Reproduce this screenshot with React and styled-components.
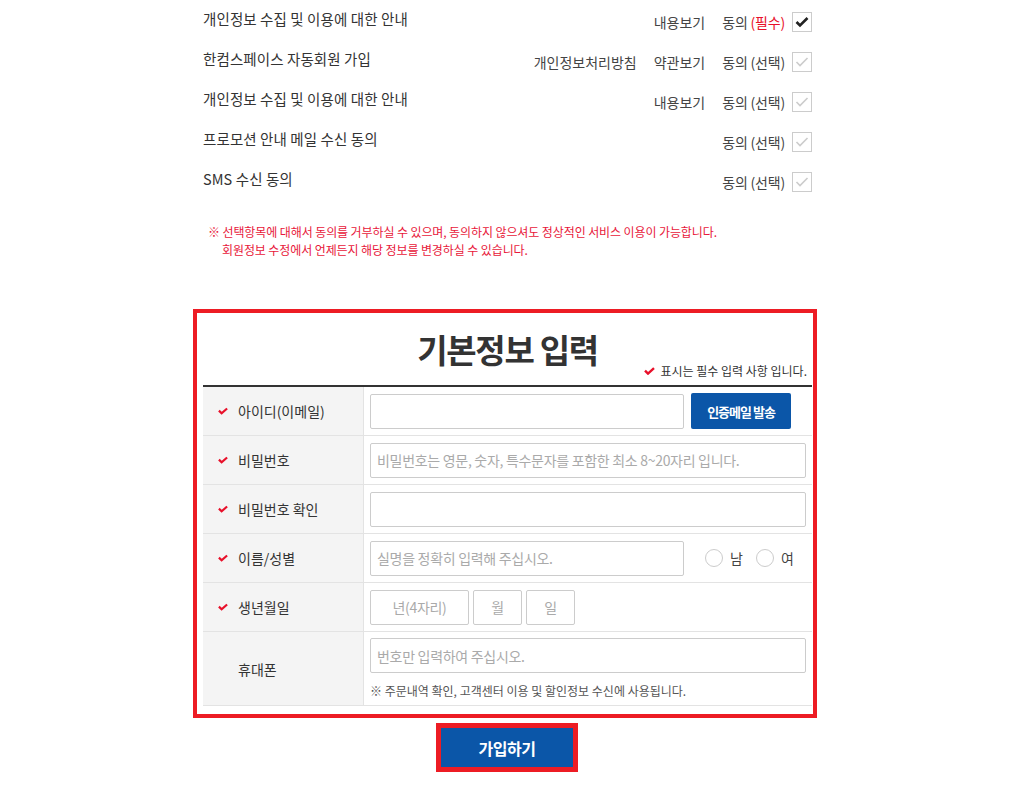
import React from 'react'
import styled, { createGlobalStyle } from 'styled-components'

const GlobalStyle = createGlobalStyle`
  body {
    margin: 0;
    background: #fff;
    color: #333;
    font-family: "Noto Sans CJK KR", "Noto Sans", sans-serif;
  }
  * { box-sizing: border-box; }
`

const Page = styled.div`
  width: 624px;
  margin-left: 193px;
  padding-bottom: 30px;
`

const AgreeList = styled.ul`
  list-style: none;
  margin: 0;
  padding: 0 5px 0 10px;
`
const AgreeRow = styled.li`
  display: flex;
  align-items: center;
  height: 40px;
`
const AgreeTitle = styled.span`
  flex: 1;
  margin-top: -3px;
  font-size: 14.5px;
  letter-spacing: 0.1px;
  color: #333;
`
const AgreeActions = styled.div`
  display: flex;
  align-items: center;
  padding-top: 4px;
`
const LinkText = styled.a`
  margin-right: 17px;
  font-size: 14px;
  letter-spacing: 0;
  color: #444;
  cursor: pointer;
`
const Consent = styled.span`
  margin-right: 7px;
  font-size: 14px;
  letter-spacing: -0.2px;
  color: #444;
`
const Required = styled.span`
  color: #e8102a;
`
const CheckBox = styled.span`
  width: 20px;
  height: 20px;
  border: 1px solid #ccc;
  background: #fff;
  display: flex;
  align-items: center;
  justify-content: center;
`

const Notice = styled.p`
  margin: 23px 0 0;
  padding-left: 15px;
  font-size: 12px;
  line-height: 18px;
  letter-spacing: -0.1px;
  color: #e8173a;
`
const NoticeIndent = styled.span`
  display: block;
  padding-left: 14px;
`

const FormBox = styled.section`
  margin-top: 50px;
  border: 4px solid #ed1c24;
  padding: 0 1px 8px 6px;
`
const Header = styled.div`
  display: flex;
  flex-direction: column;
  height: 72px;
`
const Title = styled.h2`
  margin: 16px 0 0;
  text-align: center;
  font-size: 33px;
  line-height: 40px;
  font-weight: 700;
  letter-spacing: -1.3px;
  color: #333;
`
const ReqNote = styled.p`
  align-self: flex-end;
  margin: -6px 5px 0 0;
  display: flex;
  align-items: center;
  gap: 5px;
  font-size: 12px;
  line-height: 16px;
  letter-spacing: 0;
  color: #333;
`

const Table = styled.div`
  border-top: 2px solid #333;
`
const Row = styled.div`
  display: grid;
  grid-template-columns: 161px 1fr;
  min-height: 49px;
  border-bottom: 1px solid #e3e3e3;
`
const Label = styled.div`
  display: flex;
  align-items: center;
  gap: 10px;
  padding-left: 15px;
  background: #f4f4f4;
  border-right: 1px solid #e3e3e3;
  font-size: 14px;
  letter-spacing: 0;
  color: #333;
`
const MarkSlot = styled.span`
  width: 10px;
  display: flex;
  align-items: center;
`
const Field = styled.div`
  display: flex;
  flex-direction: ${p => (p.$stack ? 'column' : 'row')};
  align-items: ${p => (p.$stack ? 'stretch' : 'center')};
  gap: ${p => (p.$stack ? '0' : '7px')};
  padding: ${p => (p.$stack ? '6px 6px 5px' : '0 6px')};
`
const Input = styled.input`
  height: 35px;
  width: ${p => (p.$w ? `${p.$w}px` : 'auto')};
  flex: ${p => (p.$w ? 'none' : '1 1 0')};
  min-width: 0;
  border: 1px solid #ccc;
  border-radius: 2px;
  padding: 0 6px;
  background: #fff;
  font-family: "Noto Sans CJK KR", sans-serif;
  font-size: 14px;
  letter-spacing: -0.3px;
  color: #333;
  text-align: ${p => (p.$center ? 'center' : 'left')};
  outline: none;
  &::placeholder { color: #aaa; }
`
const PhoneInput = styled(Input)`
  flex: none;
  width: 100%;
`
const DateGroup = styled.div`
  display: flex;
  gap: 4px;
`
const AuthButton = styled.button`
  width: 100px;
  height: 36px;
  border: 0;
  border-radius: 2px;
  background: #0b56a8;
  color: #fff;
  font-family: "Noto Sans CJK KR", sans-serif;
  font-size: 13px;
  font-weight: 700;
  letter-spacing: -1px;
`
const RadioGroup = styled.div`
  display: flex;
  align-items: center;
  margin-left: 14px;
`
const RadioItem = styled.label`
  display: flex;
  align-items: center;
  gap: 7px;
  margin-right: 13px;
  font-size: 14px;
  color: #444;
`
const RadioCircle = styled.span`
  width: 18px;
  height: 18px;
  border: 1px solid #ccc;
  border-radius: 50%;
  background: #fff;
`
const FieldNote = styled.p`
  margin: 9px 0 0;
  font-size: 12px;
  line-height: 18px;
  letter-spacing: 0;
  color: #555;
`

const SubmitWrap = styled.div`
  display: flex;
  justify-content: center;
  margin-top: 5px;
  padding-left: 4px;
`
const SubmitButton = styled.button`
  width: 142px;
  height: 49px;
  border: 5px solid #ed1c24;
  background: #0b56a8;
  color: #fff;
  font-family: "Noto Sans CJK KR", sans-serif;
  font-size: 16px;
  font-weight: 700;
  letter-spacing: -0.5px;
`

const RedCheck = () => (
  <svg width="11" height="8" viewBox="0 0 11 8">
    <path d="M1 3.6 L4 6.6 L10 1.2" fill="none" stroke="#e8102a" strokeWidth="2.4" />
  </svg>
)

const BoxCheck = ({ on }) => (
  <svg width="14" height="12" viewBox="0 0 14 12">
    <path
      d="M1.5 6 L5 9.5 L12.5 2"
      fill="none"
      stroke={on ? '#222' : '#ccc'}
      strokeWidth={on ? 2.6 : 1.6}
    />
  </svg>
)

const agreements = [
  { title: '개인정보 수집 및 이용에 대한 안내', links: ['내용보기'], required: true },
  { title: '한컴스페이스 자동회원 가입', links: ['개인정보처리방침', '약관보기'] },
  { title: '개인정보 수집 및 이용에 대한 안내', links: ['내용보기'] },
  { title: '프로모션 안내 메일 수신 동의', links: [] },
  { title: 'SMS 수신 동의', links: [] },
]

const FormRow = ({ label, required = true, stack, children }) => (
  <Row>
    <Label>
      <MarkSlot>{required && <RedCheck />}</MarkSlot>
      {label}
    </Label>
    <Field $stack={stack}>{children}</Field>
  </Row>
)

export default function App() {
  return (
    <Page>
      <GlobalStyle />
      <AgreeList>
        {agreements.map((a, i) => (
          <AgreeRow key={i}>
            <AgreeTitle>{a.title}</AgreeTitle>
            <AgreeActions>
              {a.links.map(l => (
                <LinkText key={l}>{l}</LinkText>
              ))}
              <Consent>
                동의 {a.required ? <Required>(필수)</Required> : '(선택)'}
              </Consent>
              <CheckBox>
                <BoxCheck on={a.required} />
              </CheckBox>
            </AgreeActions>
          </AgreeRow>
        ))}
      </AgreeList>

      <Notice>
        ※ 선택항목에 대해서 동의를 거부하실 수 있으며, 동의하지 않으셔도 정상적인 서비스 이용이 가능합니다.
        <NoticeIndent>회원정보 수정에서 언제든지 해당 정보를 변경하실 수 있습니다.</NoticeIndent>
      </Notice>

      <FormBox>
        <Header>
          <Title>기본정보 입력</Title>
          <ReqNote>
            <RedCheck />
            표시는 필수 입력 사항 입니다.
          </ReqNote>
        </Header>
        <Table>
          <FormRow label="아이디(이메일)">
            <Input $w={314} />
            <AuthButton>인증메일 발송</AuthButton>
          </FormRow>
          <FormRow label="비밀번호">
            <Input type="password" placeholder="비밀번호는 영문, 숫자, 특수문자를 포함한 최소 8~20자리 입니다." />
          </FormRow>
          <FormRow label="비밀번호 확인">
            <Input type="password" />
          </FormRow>
          <FormRow label="이름/성별">
            <Input $w={314} placeholder="실명을 정확히 입력해 주십시오." />
            <RadioGroup>
              <RadioItem>
                <RadioCircle />남
              </RadioItem>
              <RadioItem>
                <RadioCircle />여
              </RadioItem>
            </RadioGroup>
          </FormRow>
          <FormRow label="생년월일">
            <DateGroup>
              <Input $w={99} $center placeholder="년(4자리)" />
              <Input $w={49} $center placeholder="월" />
              <Input $w={49} $center placeholder="일" />
            </DateGroup>
          </FormRow>
          <FormRow label="휴대폰" required={false} stack>
            <PhoneInput placeholder="번호만 입력하여 주십시오." />
            <FieldNote>※ 주문내역 확인, 고객센터 이용 및 할인정보 수신에 사용됩니다.</FieldNote>
          </FormRow>
        </Table>
      </FormBox>

      <SubmitWrap>
        <SubmitButton>가입하기</SubmitButton>
      </SubmitWrap>
    </Page>
  )
}
